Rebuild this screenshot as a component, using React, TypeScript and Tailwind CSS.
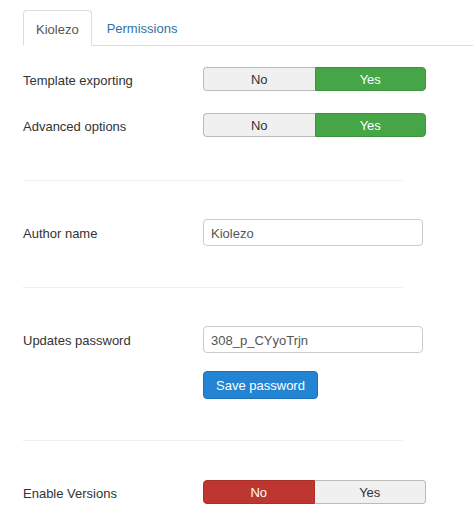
import type { ReactNode } from 'react';

function Toggle({ value }: { value: 'yes' | 'no' }) {
  const base = 'flex h-full w-1/2 items-center justify-center border pt-[1px]';
  return (
    <div className="flex h-[24px] w-[223px] text-[13px]">
      <div
        className={`${base} rounded-l-[4px] ${
          value === 'no' ? 'border-[#a9302a] bg-[#bd362f] text-white' : 'border-[#bbb] border-r-0 bg-[#f0f0f0] text-[#333]'
        }`}
      >
        No
      </div>
      <div
        className={`${base} rounded-r-[4px] ${
          value === 'yes' ? 'border-[#3e933e] bg-[#46a546] text-white' : 'border-[#bbb] border-l-0 bg-[#f0f0f0] text-[#333]'
        }`}
      >
        Yes
      </div>
    </div>
  );
}

function Row({ label, children }: { label: string; children: ReactNode }) {
  return (
    <div className="flex items-start">
      <div className="flex h-[24px] w-[180px] items-center pt-[3px] text-[13px] text-[#333]">{label}</div>
      <div className="flex flex-col">{children}</div>
    </div>
  );
}

function TextField({ value }: { value: string }) {
  return (
    <input
      readOnly
      value={value}
      className="-mt-[1px] h-[27px] w-[220px] rounded-[4px] border border-[#ccc] bg-white px-[7px] pt-[1px] text-[13px] text-[#555] outline-none"
    />
  );
}

function Divider() {
  return <hr className="w-[380px] border-0 border-t border-[#eee]" />;
}

export default function App() {
  return (
    <div className="min-h-[520px] bg-white pl-[23px] font-['Liberation_Sans',Arial,sans-serif] text-[13px]">
      <div className="flex h-[46px] items-end border-b border-[#ddd] pt-[11px]">
        <div className="-mb-[1px] flex h-[36px] items-center rounded-t-[4px] border border-[#ddd] border-b-white bg-white px-[12px] pt-[3px] text-[#555]">
          Kiolezo
        </div>
        <div className="flex h-[35px] items-center px-[15px] pt-[3px] text-[#3071a9]">Permissions</div>
      </div>

      <div className="flex flex-col">
        <div className="mt-[21px]">
          <Row label="Template exporting">
            <Toggle value="yes" />
          </Row>
        </div>
        <div className="mt-[22px]">
          <Row label="Advanced options">
            <Toggle value="yes" />
          </Row>
        </div>

        <div className="mt-[43px]">
          <Divider />
        </div>

        <div className="mt-[39px]">
          <Row label="Author name">
            <TextField value="Kiolezo" />
          </Row>
        </div>

        <div className="mt-[41px]">
          <Divider />
        </div>

        <div className="mt-[39px]">
          <Row label="Updates password">
            <TextField value="308_p_CYyoTrjn" />
            <button className="mt-[18px] h-[28px] w-[115px] rounded-[4px] border border-[#1d6fb5] bg-[#2384d3] pt-[1px] text-[13px] text-white">
              Save password
            </button>
          </Row>
        </div>

        <div className="mt-[41px]">
          <Divider />
        </div>

        <div className="mt-[39px]">
          <Row label="Enable Versions">
            <Toggle value="no" />
          </Row>
        </div>
      </div>
    </div>
  );
}
